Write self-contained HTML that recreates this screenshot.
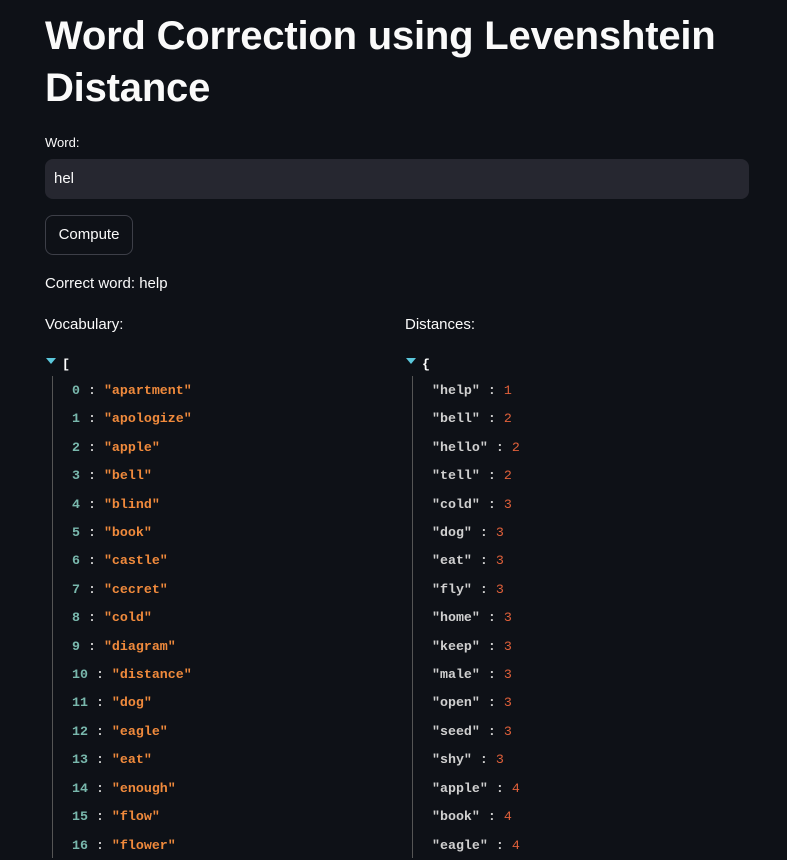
<!DOCTYPE html>
<html><head><style>
body{margin:0;background:#0e1117;color:#fafafa;font-family:"Liberation Sans",sans-serif;width:787px;height:858px;overflow:hidden;position:relative}
.a{position:absolute}
h1{position:absolute;left:45px;top:10px;margin:0;font-size:40px;line-height:52px;font-weight:bold;letter-spacing:-0.2px;width:740px}
.lbl{font-size:13px}
.inp{left:45px;top:159px;width:704px;height:40px;background:#262730;border-radius:8px;box-sizing:border-box;padding:0 9px;line-height:40px;font-size:15px}
.btn{left:45px;top:215px;width:88px;height:40px;border:1px solid #3d3f48;border-radius:8px;box-sizing:border-box;text-align:center;line-height:38px;font-size:15px}
.t{font-size:15px}
.m{font-family:"Liberation Mono",monospace;font-size:13.3px;white-space:pre;font-weight:bold}
.i{color:#79b8ad}.s{color:#f08a3c}.k{color:#d0d0d0}.n{color:#e0603a;font-weight:normal}.c{color:#ccc}
.tri{width:0;height:0;border-left:5px solid transparent;border-right:5px solid transparent;border-top:6px solid #5bc8dc}
.vl{width:1px;background:#555;top:376px;height:482px}
</style></head><body>
<h1>Word Correction using Levenshtein Distance</h1>
<div class="a lbl" style="left:45px;top:135px">Word:</div>
<div class="a inp">hel</div>
<div class="a btn">Compute</div>
<div class="a t" style="left:45px;top:275px">Correct word: help</div>
<div class="a t" style="left:45px;top:316px">Vocabulary:</div>
<div class="a t" style="left:405px;top:316px">Distances:</div>
<div class="a tri" style="left:46px;top:358px"></div>
<div class="a m" style="left:62px;top:357px;color:#fff;font-weight:bold">[</div>
<div class="a tri" style="left:406px;top:358px"></div>
<div class="a m" style="left:422px;top:357px;color:#fff;font-weight:bold">{</div>
<div class="a vl" style="left:52px"></div>
<div class="a vl" style="left:412px"></div>
<div class="a" style="left:72px;top:377px">
<div class="m" style="line-height:28.4px"><span class="i">0</span><span class="c"> : </span><span class="s">"apartment"</span>
<span class="i">1</span><span class="c"> : </span><span class="s">"apologize"</span>
<span class="i">2</span><span class="c"> : </span><span class="s">"apple"</span>
<span class="i">3</span><span class="c"> : </span><span class="s">"bell"</span>
<span class="i">4</span><span class="c"> : </span><span class="s">"blind"</span>
<span class="i">5</span><span class="c"> : </span><span class="s">"book"</span>
<span class="i">6</span><span class="c"> : </span><span class="s">"castle"</span>
<span class="i">7</span><span class="c"> : </span><span class="s">"cecret"</span>
<span class="i">8</span><span class="c"> : </span><span class="s">"cold"</span>
<span class="i">9</span><span class="c"> : </span><span class="s">"diagram"</span>
<span class="i">10</span><span class="c"> : </span><span class="s">"distance"</span>
<span class="i">11</span><span class="c"> : </span><span class="s">"dog"</span>
<span class="i">12</span><span class="c"> : </span><span class="s">"eagle"</span>
<span class="i">13</span><span class="c"> : </span><span class="s">"eat"</span>
<span class="i">14</span><span class="c"> : </span><span class="s">"enough"</span>
<span class="i">15</span><span class="c"> : </span><span class="s">"flow"</span>
<span class="i">16</span><span class="c"> : </span><span class="s">"flower"</span></div></div>
<div class="a" style="left:432px;top:377px">
<div class="m" style="line-height:28.4px"><span class="k">"help"</span><span class="c"> : </span><span class="n">1</span>
<span class="k">"bell"</span><span class="c"> : </span><span class="n">2</span>
<span class="k">"hello"</span><span class="c"> : </span><span class="n">2</span>
<span class="k">"tell"</span><span class="c"> : </span><span class="n">2</span>
<span class="k">"cold"</span><span class="c"> : </span><span class="n">3</span>
<span class="k">"dog"</span><span class="c"> : </span><span class="n">3</span>
<span class="k">"eat"</span><span class="c"> : </span><span class="n">3</span>
<span class="k">"fly"</span><span class="c"> : </span><span class="n">3</span>
<span class="k">"home"</span><span class="c"> : </span><span class="n">3</span>
<span class="k">"keep"</span><span class="c"> : </span><span class="n">3</span>
<span class="k">"male"</span><span class="c"> : </span><span class="n">3</span>
<span class="k">"open"</span><span class="c"> : </span><span class="n">3</span>
<span class="k">"seed"</span><span class="c"> : </span><span class="n">3</span>
<span class="k">"shy"</span><span class="c"> : </span><span class="n">3</span>
<span class="k">"apple"</span><span class="c"> : </span><span class="n">4</span>
<span class="k">"book"</span><span class="c"> : </span><span class="n">4</span>
<span class="k">"eagle"</span><span class="c"> : </span><span class="n">4</span></div></div>
</body></html>
